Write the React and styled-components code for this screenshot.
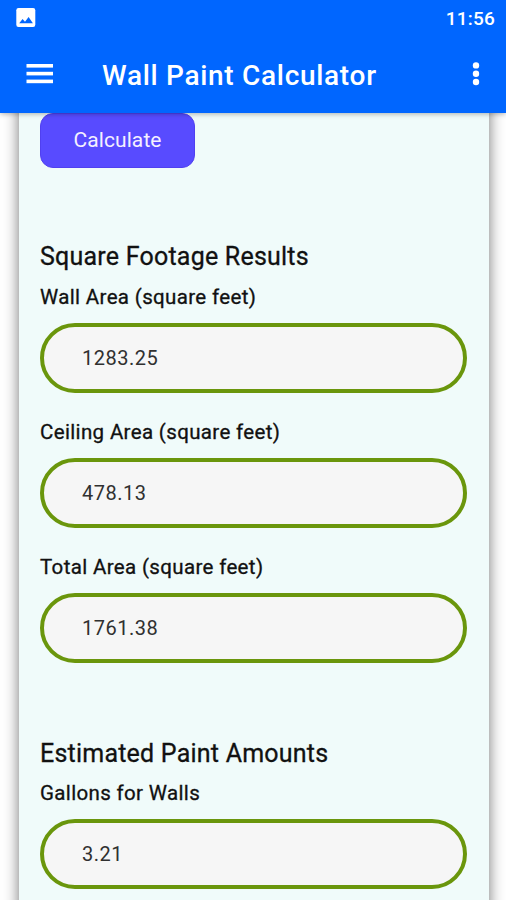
import React from "react";
import styled, { createGlobalStyle } from "styled-components";

/* ================= LAYOUT ================= */

const GlobalStyle = createGlobalStyle`
  * {
    box-sizing: border-box;
  }

  body {
    margin: 0;
    background: #fff;
    font-family: Roboto, "Liberation Sans", sans-serif;
  }
`;

const Screen = styled.div`
  height: 900px;
  width: 506px;
  display: flex;
  flex-direction: column;
  overflow: hidden;
`;

const Content = styled.main`
  flex: 1;
  min-height: 0;
  overflow: hidden;
  padding: 0 17px 0 18.5px;
`;

const Card = styled.div`
  height: 1200px;
  margin-top: -40px;
  padding: 39.6px 22px 0 21.5px;
  background: #f0fbfa;
  box-shadow: 0 0 14px rgba(0, 0, 0, 0.55);
`;

/* ================= HEADER ================= */

const TopBar = styled.header`
  position: relative;
  z-index: 1;
  flex: none;
  height: 113px;
  background: #0066ff;
  color: #fff;
  box-shadow: 0 1px 5px rgba(0, 0, 0, 0.3);
`;

const StatusBar = styled.div`
  height: 36px;
  padding: 0 11px 0 16px;
  display: flex;
  align-items: center;
  justify-content: space-between;
`;

const Clock = styled.span`
  font-size: 19px;
  font-weight: 500;
  letter-spacing: 0.2px;
`;

const Toolbar = styled.div`
  height: 77px;
  padding: 0 20px 2px 26px;
  display: flex;
  align-items: center;
`;

const Title = styled.h1`
  flex: 1;
  margin: 4px 0 0 48px;
  font-size: 28px;
  font-weight: 500;
  letter-spacing: 0.7px;
  white-space: nowrap;
`;

const IconButton = styled.button`
  display: flex;
  padding: 0;
  border: none;
  background: none;
  color: inherit;
`;

/* ================= FORM ================= */

const CalculateButton = styled.button`
  display: block;
  width: 155px;
  height: 55px;
  padding: 0 0 1px;
  border: 1px solid #5040f0;
  border-radius: 13px;
  background: #584bff;
  color: #f4f0ff;
  font-family: inherit;
  font-size: 21px;
  letter-spacing: 0.1px;
`;

const Section = styled.section`
  padding-top: ${({ $gap }) => $gap}px;
`;

const SectionTitle = styled.h2`
  margin: 0;
  font-size: 25px;
  line-height: 38.5px;
  font-weight: 400;
  letter-spacing: 0.22px;
  color: #111;
  -webkit-text-stroke: 0.3px #111;
`;

const Field = styled.label`
  display: block;
  height: 135.3px;
`;

const Label = styled.span`
  display: block;
  height: 46px;
  font-size: 20.5px;
  line-height: 40px;
  letter-spacing: 0.35px;
  color: #111;
  -webkit-text-stroke: 0.3px #111;
`;

const Value = styled.input`
  display: block;
  width: 100%;
  height: 70px;
  padding: 0 38px;
  border: 4px solid #6a960c;
  border-radius: 35px;
  background: #f6f6f6;
  color: #303030;
  font-family: inherit;
  font-size: 20px;
  font-weight: 400;
  letter-spacing: 0.5px;
  outline: none;
`;

/* ================= DATA ================= */

const sections = [
  {
    title: "Square Footage Results",
    gap: 70.5,
    fields: [
      { label: "Wall Area (square feet)", value: "1283.25" },
      { label: "Ceiling Area (square feet)", value: "478.13" },
      { label: "Total Area (square feet)", value: "1761.38" },
    ],
  },
  {
    title: "Estimated Paint Amounts",
    gap: 52.5,
    fields: [{ label: "Gallons for Walls", value: "3.21" }],
  },
];

/* ================= COMPONENT ================= */

export default function App() {
  return (
    <Screen>
      <GlobalStyle />
      <TopBar>
        <StatusBar>
          <svg width="20" height="20" viewBox="0 0 20 20">
            <rect x="0.3" y="0" width="19" height="19" rx="2.2" fill="#fff" />
            <path
              d="M3.2 15.3l3.4-4.3 2.4 2.7 3.6-4.6 4.3 6.2z"
              fill="#0066ff"
            />
          </svg>
          <Clock>11:56</Clock>
        </StatusBar>
        <Toolbar>
          <IconButton aria-label="Menu">
            <svg width="28" height="20" viewBox="0 0 28 20" fill="#fff">
              <rect x="0.5" y="0" width="26.5" height="3.6" />
              <rect x="0.5" y="7.8" width="26.5" height="3.6" />
              <rect x="0.5" y="15.6" width="26.5" height="3.6" />
            </svg>
          </IconButton>
          <Title>Wall Paint Calculator</Title>
          <IconButton aria-label="More">
            <svg width="20" height="24" viewBox="0 0 20 24" fill="#fff">
              <circle cx="10" cy="3.4" r="3.2" />
              <circle cx="10" cy="11.7" r="3.2" />
              <circle cx="10" cy="20" r="3.2" />
            </svg>
          </IconButton>
        </Toolbar>
      </TopBar>

      <Content>
        <Card>
          <CalculateButton>Calculate</CalculateButton>
          {sections.map((section) => (
            <Section key={section.title} $gap={section.gap}>
              <SectionTitle>{section.title}</SectionTitle>
              {section.fields.map((field) => (
                <Field key={field.label}>
                  <Label>{field.label}</Label>
                  <Value readOnly value={field.value} />
                </Field>
              ))}
            </Section>
          ))}
        </Card>
      </Content>
    </Screen>
  );
}
